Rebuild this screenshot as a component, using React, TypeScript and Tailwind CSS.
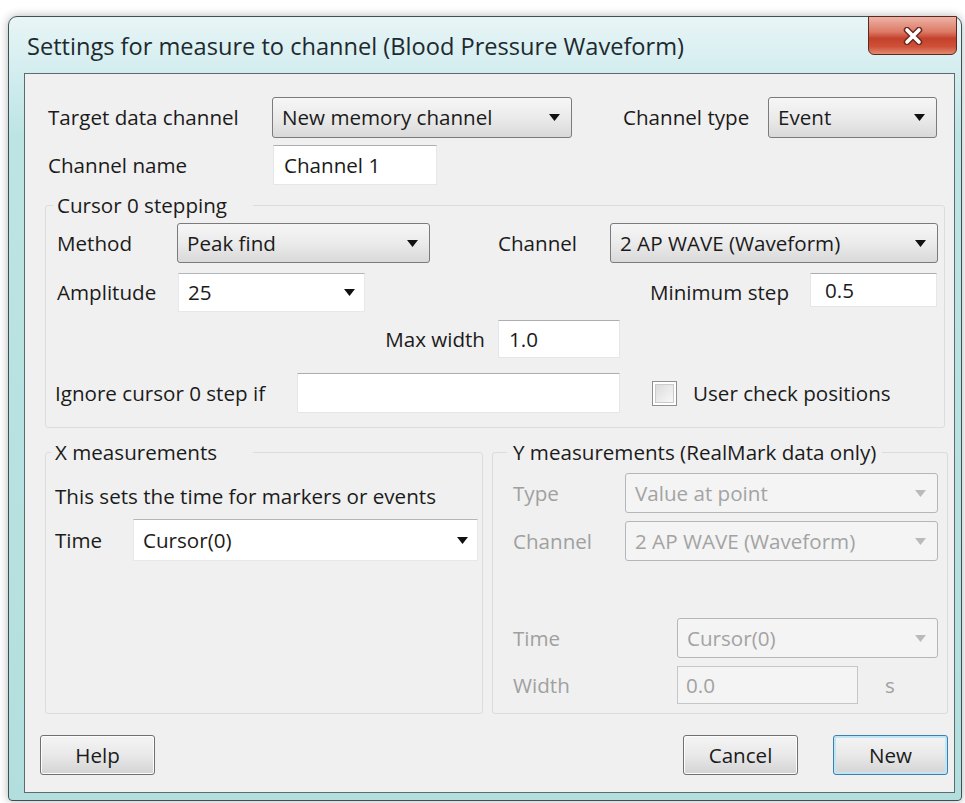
import type { ReactNode } from "react"

function Arrow({ off }: { off?: boolean }) {
  return (
    <svg className="h-[7px] w-[11px] shrink-0" viewBox="0 0 11 7">
      <path d="M0 0h11L5.5 7z" fill={off ? "#b8bbbd" : "#111111"} />
    </svg>
  )
}

// Win7 style drop-down list (button look)
function DropList({
  className,
  children,
  off,
}: {
  className: string
  children: ReactNode
  off?: boolean
}) {
  return (
    <div
      className={`flex h-full shrink-0 items-center justify-between rounded-[3px] border pl-[9px] pr-[11px] ${
        off
          ? "border-[#b3b7ba] bg-[#f4f4f4] text-[#a3a3a3]"
          : "border-[#7b7b7b] bg-gradient-to-b from-[#f6f6f6] via-[#ebebeb] to-[#d9d9d9]"
      } ${className}`}
    >
      <span>{children}</span>
      <Arrow off={off} />
    </div>
  )
}

// editable combo, flat white
function EditCombo({ className, children }: { className: string; children: ReactNode }) {
  return (
    <div
      className={`flex h-full shrink-0 items-center justify-between border border-[#e6e8ea] border-t-[#b2b6b9] bg-white pl-[9px] pr-[9px] ${className}`}
    >
      <span>{children}</span>
      <Arrow />
    </div>
  )
}

function Edit({
  className,
  children,
  off,
}: {
  className: string
  children?: ReactNode
  off?: boolean
}) {
  return (
    <div
      className={`flex shrink-0 items-center border ${
        off
          ? "border-[#c3c7ca] bg-[#f4f4f4] text-[#a3a3a3]"
          : "border-[#e4e7ea] border-t-[#abadb3] bg-white"
      } ${className}`}
    >
      {children}
    </div>
  )
}

function Button({ children, primary }: { children: ReactNode; primary?: boolean }) {
  return (
    <button
      className={`flex h-full w-[115px] shrink-0 items-center justify-center rounded-[3px] border bg-gradient-to-b from-[#f4f4f4] via-[#e9e9e9] to-[#d3d3d3] ${
        primary
          ? "border-[#3c7fb1] shadow-[inset_0_0_0_2px_#bfe6f5]"
          : "border-[#707070] shadow-[inset_0_0_0_1px_#fcfcfc]"
      }`}
    >
      {children}
    </button>
  )
}

export default function App() {
  return (
    <div className="h-[803px] w-[965px] overflow-hidden bg-white font-['Open_Sans',sans-serif] text-[20.6px] text-[#1b1b1b]">
      <div className="ml-[8px] mt-[16px] flex h-[785px] w-[954px] flex-col rounded-t-[9px] rounded-b-[4px] border border-[#3f5157] bg-[linear-gradient(180deg,#e8f5f6_0px,#d3edef_56px,#bce4e3_120px,#b2dfdd_100%)] shadow-[0_0_10px_rgba(0,0,0,0.3)]">
        {/* title bar */}
        <div className="flex h-[56px] shrink-0 items-start">
          <div className="ml-[18px] mt-[15px] text-[23.6px] leading-[28px] text-[#1d2a2f]">
            Settings for measure to channel (Blood Pressure Waveform)
          </div>
          <div className="flex-1" />
          <button className="-mt-px mr-[4px] flex h-[39px] w-[89px] items-center justify-center rounded-b-[6px] border border-[#5a2a22] bg-[linear-gradient(180deg,#eeb3a6_0%,#dc7a66_40%,#c4412b_58%,#cf5038_80%,#e28a70_100%)]">
            <svg width="22" height="18" viewBox="0 0 22 18">
              <path d="M5 3l12 12M17 3L5 15" stroke="#6b2a1f" strokeWidth="6.5" strokeLinecap="round" />
              <path d="M5 3l12 12M17 3L5 15" stroke="#ffffff" strokeWidth="3.6" strokeLinecap="round" />
            </svg>
          </button>
        </div>

        {/* client area */}
        <div className="mb-[7px] ml-[15px] mr-[6px] flex flex-1 flex-col border border-[#5b6b70] bg-[#f0f0f0]">
          <div className="mt-[23px] flex h-[41px] items-center">
            <span className="ml-[23px] w-[224px] shrink-0">Target data channel</span>
            <DropList className="w-[300px]">New memory channel</DropList>
            <span className="ml-[51px] w-[145px] shrink-0">Channel type</span>
            <DropList className="w-[169px]">Event</DropList>
          </div>

          <div className="mt-[7px] flex h-[40px] items-center">
            <span className="ml-[23px] w-[225px] shrink-0">Channel name</span>
            <Edit className="h-full w-[164px] pl-[10px]">Channel 1</Edit>
          </div>

          {/* Cursor 0 stepping */}
          <div className="ml-[20px] mt-[20px] flex w-[900px] flex-col rounded-[3px] border border-[#dadddf] pb-[14px]">
            <div className="-mt-[13px] ml-[7px] h-[24px] w-[200px] bg-[#f0f0f0] pl-[4px] leading-[24px]">
              Cursor 0 stepping
            </div>
            <div className="mt-[6px] flex h-[40px] items-center">
              <span className="ml-[11px] w-[120px] shrink-0">Method</span>
              <DropList className="w-[253px]">Peak find</DropList>
              <span className="ml-[68px] w-[112px] shrink-0">Channel</span>
              <DropList className="w-[328px]">2 AP WAVE (Waveform)</DropList>
            </div>
            <div className="mt-[10px] flex h-[39px] items-center">
              <span className="ml-[11px] w-[121px] shrink-0">Amplitude</span>
              <EditCombo className="w-[187px]">25</EditCombo>
              <span className="ml-[285px] w-[160px] shrink-0">Minimum step</span>
              <Edit className="h-[34px] w-[127px] self-start pl-[14px]">0.5</Edit>
            </div>
            <div className="mt-[8px] flex h-[38px] items-center">
              <span className="ml-[11px] w-[441px] shrink-0 pr-[13px] text-right">Max width</span>
              <Edit className="h-full w-[122px] pl-[10px]">1.0</Edit>
            </div>
            <div className="mt-[15px] flex h-[40px] items-center">
              <span className="ml-[9px] w-[242px] shrink-0">Ignore cursor 0 step if</span>
              <Edit className="h-full w-[323px]" />
              <div className="ml-[32px] h-[25px] w-[25px] shrink-0 border border-[#8f8f8f] bg-white p-[2px]">
                <div className="h-full w-full border border-[#c9cccf] bg-gradient-to-br from-[#dcdcdc] to-[#f8f8f8]" />
              </div>
              <span className="ml-[16px]">User check positions</span>
            </div>
          </div>

          {/* X / Y measurements */}
          <div className="ml-[20px] mt-[24px] flex gap-[9px]">
            <div className="flex h-[262px] w-[438px] flex-col rounded-[3px] border border-[#dadddf]">
              <div className="-mt-[13px] ml-[5px] h-[24px] w-[202px] bg-[#f0f0f0] pl-[4px] leading-[24px]">
                X measurements
              </div>
              <div className="ml-[9px] mt-[20px] h-[24px] leading-[24px]">
                This sets the time for markers or events
              </div>
              <div className="mt-[11px] flex h-[42px] items-center">
                <span className="ml-[9px] w-[78px] shrink-0">Time</span>
                <EditCombo className="w-[345px]">Cursor(0)</EditCombo>
              </div>
            </div>

            <div className="flex h-[262px] w-[456px] flex-col rounded-[3px] border border-[#dadddf]">
              <div className="-mt-[13px] ml-[14px] h-[24px] self-start bg-[#f0f0f0] px-[6px] leading-[24px]">
                Y measurements (RealMark data only)
              </div>
              <div className="mt-[9px] flex h-[40px] items-center">
                <span className="ml-[20px] w-[112px] shrink-0 text-[#a0a0a0]">Type</span>
                <DropList off className="w-[313px]">Value at point</DropList>
              </div>
              <div className="mt-[8px] flex h-[40px] items-center">
                <span className="ml-[20px] w-[112px] shrink-0 text-[#a0a0a0]">Channel</span>
                <DropList off className="w-[313px]">2 AP WAVE (Waveform)</DropList>
              </div>
              <div className="mt-[57px] flex h-[40px] items-center">
                <span className="ml-[20px] w-[164px] shrink-0 text-[#a0a0a0]">Time</span>
                <DropList off className="w-[261px]">Cursor(0)</DropList>
              </div>
              <div className="mt-[8px] flex h-[38px] items-center">
                <span className="ml-[20px] w-[164px] shrink-0 text-[#a0a0a0]">Width</span>
                <Edit off className="h-full w-[181px] pl-[8px]">0.0</Edit>
                <span className="ml-[27px] text-[#a0a0a0]">s</span>
              </div>
            </div>
          </div>

          {/* dialog buttons */}
          <div className="mt-[21px] flex h-[40px]">
            <div className="ml-[15px] h-full">
              <Button>Help</Button>
            </div>
            <div className="flex-1" />
            <Button>Cancel</Button>
            <div className="ml-[35px] mr-[6px] h-full">
              <Button primary>New</Button>
            </div>
          </div>
        </div>
      </div>
    </div>
  )
}
